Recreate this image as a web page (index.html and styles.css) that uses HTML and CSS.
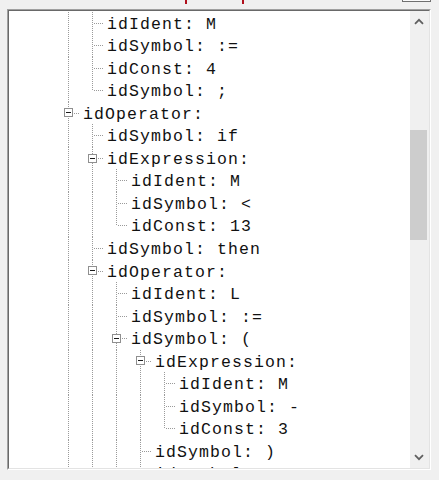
FILE: index.html
```html
<!DOCTYPE html>
<html>
<head>
<meta charset="utf-8">
<link rel="stylesheet" href="styles.css">
</head>
<body>
<div class="window">
  <div class="topbar">
    <span class="mark m1"></span>
    <span class="mark m2"></span>
    <span class="btn-edge"></span>
  </div>
  <div class="frame">
    <div class="frame-inner">
      <div class="tree">
        <div class="row"><span class="g v"></span><span class="g t"></span><span class="label">idIdent: M</span></div>
        <div class="row"><span class="g v"></span><span class="g t"></span><span class="label">idSymbol: :=</span></div>
        <div class="row"><span class="g v"></span><span class="g t"></span><span class="label">idConst: 4</span></div>
        <div class="row"><span class="g v"></span><span class="g e"></span><span class="label">idSymbol: ;</span></div>
        <div class="row"><span class="g t x"><span class="box"></span></span><span class="label">idOperator:</span></div>
        <div class="row"><span class="g v"></span><span class="g t"></span><span class="label">idSymbol: if</span></div>
        <div class="row"><span class="g v"></span><span class="g t x"><span class="box"></span></span><span class="label">idExpression:</span></div>
        <div class="row"><span class="g v"></span><span class="g v"></span><span class="g t"></span><span class="label">idIdent: M</span></div>
        <div class="row"><span class="g v"></span><span class="g v"></span><span class="g t"></span><span class="label">idSymbol: &lt;</span></div>
        <div class="row"><span class="g v"></span><span class="g v"></span><span class="g e"></span><span class="label">idConst: 13</span></div>
        <div class="row"><span class="g v"></span><span class="g t"></span><span class="label">idSymbol: then</span></div>
        <div class="row"><span class="g v"></span><span class="g t x"><span class="box"></span></span><span class="label">idOperator:</span></div>
        <div class="row"><span class="g v"></span><span class="g v"></span><span class="g t"></span><span class="label">idIdent: L</span></div>
        <div class="row"><span class="g v"></span><span class="g v"></span><span class="g t"></span><span class="label">idSymbol: :=</span></div>
        <div class="row"><span class="g v"></span><span class="g v"></span><span class="g t x"><span class="box"></span></span><span class="label">idSymbol: (</span></div>
        <div class="row"><span class="g v"></span><span class="g v"></span><span class="g v"></span><span class="g t x"><span class="box"></span></span><span class="label">idExpression:</span></div>
        <div class="row"><span class="g v"></span><span class="g v"></span><span class="g v"></span><span class="g v"></span><span class="g t"></span><span class="label">idIdent: M</span></div>
        <div class="row"><span class="g v"></span><span class="g v"></span><span class="g v"></span><span class="g v"></span><span class="g t"></span><span class="label">idSymbol: -</span></div>
        <div class="row"><span class="g v"></span><span class="g v"></span><span class="g v"></span><span class="g v"></span><span class="g e"></span><span class="label">idConst: 3</span></div>
        <div class="row"><span class="g v"></span><span class="g v"></span><span class="g v"></span><span class="g t"></span><span class="label">idSymbol: )</span></div>
        <div class="row"><span class="g v"></span><span class="g v"></span><span class="g v"></span><span class="g t"></span><span class="label">idSymbol: ;</span></div>
      </div>
      <div class="scrollbar">
        <div class="sb-btn">
          <svg width="10" height="7" viewBox="0 0 10 7"><polyline points="1,5.8 5,1.8 9,5.8" fill="none" stroke="#606060" stroke-width="1.8"/></svg>
        </div>
        <div class="sb-track"><div class="sb-thumb"></div></div>
        <div class="sb-btn">
          <svg width="10" height="7" viewBox="0 0 10 7"><polyline points="1,1.2 5,5.2 9,1.2" fill="none" stroke="#606060" stroke-width="1.8"/></svg>
        </div>
      </div>
    </div>
  </div>
</div>
</body>
</html>
```

FILE: styles.css
```css
html, body {
  margin: 0;
  padding: 0;
  background: #f0f0f0;
}

.window {
  width: 439px;
  height: 480px;
  overflow: hidden;
  background: #f0f0f0;
}

.topbar {
  display: flex;
  align-items: flex-start;
  height: 9px;
}

.mark {
  display: block;
  width: 2px;
  height: 4px;
  background: #b0101c;
}

.m1 { margin-left: 185px; }
.m2 { margin-left: 55px; }

.btn-edge {
  display: block;
  margin-left: 158px;
  width: 29px;
  height: 2px;
  box-sizing: border-box;
  border: 1px solid #707070;
  border-top: none;
  background: #fafafa;
}

.frame {
  margin-left: 7px;
  width: 424px;
  height: 461px;
  box-sizing: border-box;
  border: 1px solid;
  border-color: #a0a0a0 #ffffff #ffffff #a0a0a0;
}

.frame-inner {
  height: 100%;
  box-sizing: border-box;
  border: 1px solid;
  border-color: #696969 #e3e3e3 #e3e3e3 #696969;
  display: flex;
  background: #ffffff;
}

.tree {
  flex: 1;
  overflow: hidden;
  padding-left: 47px;
  padding-top: 0.5px;
  font-family: "Liberation Mono", "Courier New", monospace;
  font-size: 16.5px;
  letter-spacing: 1.1px;
  color: #111;
}

.row {
  display: flex;
  height: 22.55px;
  line-height: 22.55px;
  white-space: pre;
}

.g {
  flex: none;
  width: 24px;
  height: 100%;
  display: flex;
  align-items: center;
  background-repeat: no-repeat;
}

.v {
  background-image: repeating-linear-gradient(to bottom, #9a9a9a 0 1px, transparent 1px 2px);
  background-position: 12px 0;
  background-size: 1px 100%;
}

.t {
  background-image:
    repeating-linear-gradient(to bottom, #9a9a9a 0 1px, transparent 1px 2px),
    repeating-linear-gradient(to right, #9a9a9a 0 1px, transparent 1px 2px);
  background-position: 12px 0, 14px 11px;
  background-size: 1px 100%, 10px 1px;
}

.e {
  background-image:
    repeating-linear-gradient(to bottom, #9a9a9a 0 1px, transparent 1px 2px),
    repeating-linear-gradient(to right, #9a9a9a 0 1px, transparent 1px 2px);
  background-position: 12px 0, 14px 11px;
  background-size: 1px 12px, 10px 1px;
}

.box {
  display: block;
  margin-left: 8px;
  width: 9px;
  height: 9px;
  box-sizing: border-box;
  border: 1px solid #8f8f8f;
  background: linear-gradient(#1a1a1a, #1a1a1a) center / 5px 1px no-repeat, #ffffff;
}

.label {
  padding-left: 3px;
  padding-top: 2px;
}

.scrollbar {
  flex: none;
  width: 19px;
  box-sizing: border-box;
  padding-right: 2px;
  background: #f0f0f0;
  display: flex;
  flex-direction: column;
}

.sb-btn {
  height: 21px;
  display: flex;
  align-items: center;
  justify-content: center;
}

.sb-track {
  flex: 1;
}

.sb-thumb {
  margin-top: 98px;
  height: 110px;
  background: #cdcdcd;
}
```
